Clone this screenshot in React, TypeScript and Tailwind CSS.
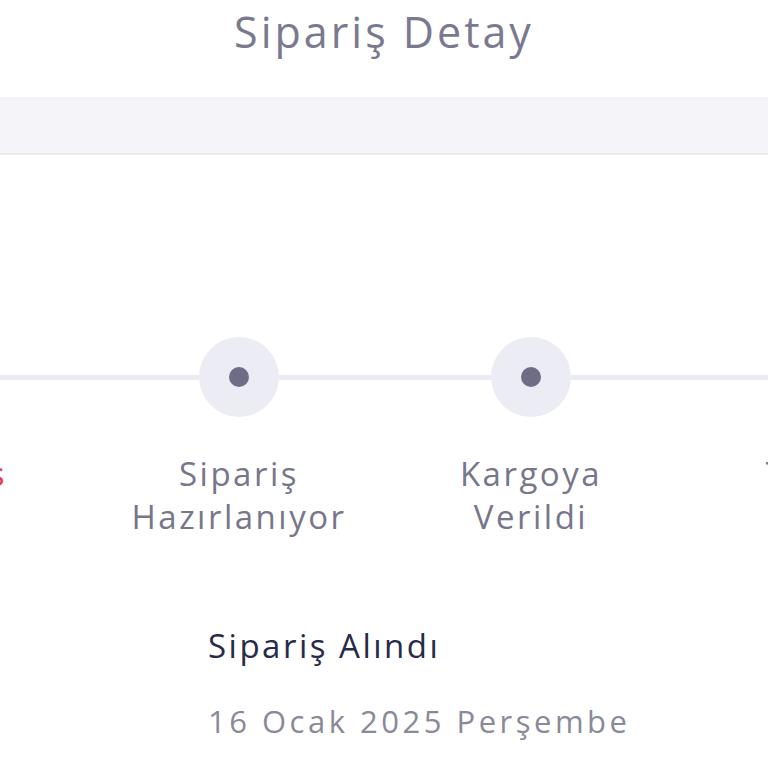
import React from 'react';

type Step = { label: string[]; active?: boolean };

const STEPS: Step[] = [
  { label: ['Sipariş', 'Alındı'], active: true },
  { label: ['Sipariş', 'Hazırlanıyor'] },
  { label: ['Kargoya', 'Verildi'] },
  { label: ['Teslim', 'Edildi'] },
];

function TimelineStep({ step }: { step: Step }) {
  return (
    <div className="w-[292px] shrink-0 flex flex-col items-center">
      <div className="flex items-center w-full">
        <div className="flex-1 h-[5px] bg-[#ebeaf3]" />
        <div
          className={`w-20 h-20 rounded-full flex items-center justify-center ${
            step.active ? 'bg-[#fde3e7]' : 'bg-[#ececf5]'
          }`}
        >
          <span
            className={`block w-5 h-5 rounded-full ${
              step.active ? 'bg-[#e8384f]' : 'bg-[#6e6d85]'
            }`}
          />
        </div>
        <div className="flex-1 h-[5px] bg-[#ebeaf3]" />
      </div>
      <div
        className={`mt-[35px] text-[33px] leading-[43px] tracking-[2.5px] text-center ${
          step.active ? 'text-[#e8384f]' : 'text-[#77768b]'
        }`}
      >
        {step.label.map((l) => (
          <div key={l}>{l}</div>
        ))}
      </div>
    </div>
  );
}

export default function App() {
  return (
    <div className="w-[768px] h-[768px] overflow-hidden bg-white font-['Open_Sans','Noto_Sans',sans-serif]">
      {/* Header */}
      <div className="h-[97px] flex justify-center pt-[6px]">
        <h1 className="text-[43px] leading-[52px] tracking-[3px] text-[#7a798f]">
          Sipariş Detay
        </h1>
      </div>
      <div className="h-[58px] bg-[#f5f5f9] border-b-2 border-[#eae9f1]" />

      {/* Timeline */}
      <div className="flex ml-[-199px] mt-[182px]">
        {STEPS.map((s) => (
          <TimelineStep key={s.label.join(' ')} step={s} />
        ))}
      </div>

      {/* Details */}
      <div className="pl-[208px] mt-[86px]">
        <p className="text-[33px] leading-[43px] tracking-[2.5px] text-[#272a48]">Sipariş Alındı</p>
        <p className="mt-[33px] text-[31px] leading-[43px] tracking-[3.5px] text-[#8a8999]">
          16 Ocak 2025 Perşembe
        </p>
      </div>
    </div>
  );
}
